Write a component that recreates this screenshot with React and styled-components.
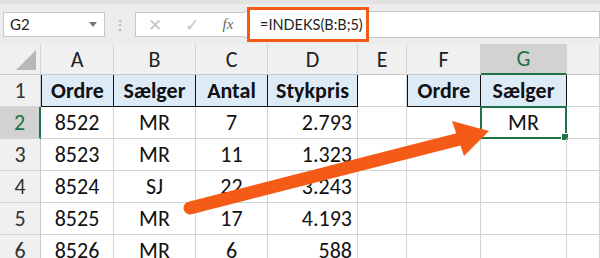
import React from 'react';
import styled, { createGlobalStyle } from 'styled-components';

const GlobalStyle = createGlobalStyle`
  html, body { margin: 0; padding: 0; background: #fff; }
  body { font-family: Carlito, Lato, "Open Sans", sans-serif; }
`;

const orange = '#f45b16';
const green = '#217346';
const cols = [41, 73, 82, 72, 90, 49, 74, 86, 33];

const Sheet = styled.div`
  position: relative;
  width: 600px;
  height: 258px;
  overflow: hidden;
  background: #fff;
`;

const Toolbar = styled.div`
  display: flex;
  align-items: center;
  height: 44px;
  padding: 0 0 0 3px;
  background: #ececec;
  border-top: 4px solid #e2e2e2;
  box-sizing: border-box;
  font-family: Lato, "Open Sans", sans-serif;
`;

const NameBox = styled.div`
  display: flex;
  align-items: center;
  justify-content: space-between;
  width: 102px;
  height: 25px;
  box-sizing: border-box;
  padding: 0 7px 0 6px;
  background: #fff;
  border: 1px solid #c6c6c6;
  font-size: 15px;
  color: #222;
`;

const Caret = styled.span`
  width: 0;
  height: 0;
  border-left: 4px solid transparent;
  border-right: 4px solid transparent;
  border-top: 5px solid #777;
`;

const Grip = styled.div`
  width: 30px;
  text-align: center;
  color: #aaa;
  font-size: 14px;
`;

const FxBox = styled.div`
  display: flex;
  align-items: center;
  justify-content: space-around;
  width: 110px;
  height: 25px;
  box-sizing: border-box;
  background: #fff;
  border: 1px solid #c6c6c6;
  border-right: none;
  color: #c4c4c4;
  font-size: 17px;
`;

const Fx = styled.span`
  font-family: "Liberation Serif", serif;
  font-style: italic;
  font-size: 15px;
  color: #666;
`;

const FormulaArea = styled.div`
  flex: 1;
  display: flex;
  align-items: center;
  height: 25px;
  background: #fff;
  border: 1px solid #c6c6c6;
  border-left: none;
`;

const FormulaText = styled.div`
  height: 29px;
  margin-left: 2px;
  padding: 0 3px 0 10px;
  display: flex;
  align-items: center;
  border: 3px solid ${orange};
  background: #fff;
  font-size: 14.5px;
  color: #222;
`;

const Grid = styled.div`
  display: grid;
  grid-template-columns: ${cols.map((c) => c + 'px').join(' ')};
  grid-template-rows: 31px repeat(6, 32px);
`;

const ColHead = styled.div`
  display: flex;
  align-items: center;
  justify-content: center;
  background: ${(p) => (p.$active ? '#d2d2d2' : '#f0f0f0')};
  border-right: 1px solid #d4d4d4;
  border-bottom: ${(p) => (p.$active ? `2px solid ${green}` : '1px solid #c8c8c8')};
  box-sizing: border-box;
  font-size: 22px;
  color: ${(p) => (p.$active ? green : '#222')};
  position: relative;
`;

const Corner = styled(ColHead)`
  &::after {
    content: '';
    position: absolute;
    right: 4px;
    bottom: 4px;
    border-left: 20px solid transparent;
    border-bottom: 20px solid #b8b8b8;
  }
`;

const RowHead = styled.div`
  display: flex;
  align-items: center;
  justify-content: center;
  background: ${(p) => (p.$active ? '#d2d2d2' : '#f0f0f0')};
  border-right: ${(p) => (p.$active ? `2px solid ${green}` : '1px solid #c8c8c8')};
  border-bottom: 1px solid #d4d4d4;
  box-sizing: border-box;
  font-size: 22px;
  color: ${(p) => (p.$active ? green : '#333')};
`;

const Cell = styled.div`
  position: relative;
  display: flex;
  align-items: center;
  justify-content: ${(p) => (p.$right ? 'flex-end' : 'center')};
  padding-right: ${(p) => (p.$right ? '5px' : '0')};
  box-sizing: border-box;
  border-right: 1px solid #d4d4d4;
  border-bottom: 1px solid #d4d4d4;
  font-size: 22px;
  color: #111;
  white-space: nowrap;
`;

const HeadCell = styled(Cell)`
  background: #ddebf7;
  border-right: 1px solid #111;
  border-bottom: 1px solid #111;
  border-left: ${(p) => (p.$first ? '1px solid #111' : 'none')};
  font-weight: bold;
`;

const Selected = styled(Cell)`
  border: 2px solid ${green};
  margin: -1px 0 0 -1px;
  &::after {
    content: '';
    position: absolute;
    right: -4px;
    bottom: -4px;
    width: 6px;
    height: 6px;
    background: ${green};
    border: 1px solid #fff;
  }
`;

const Arrow = styled.svg`
  position: absolute;
  left: 0;
  top: 0;
  pointer-events: none;
`;

const data = [
  ['8522', 'MR', '7', '2.793'],
  ['8523', 'MR', '11', '1.323'],
  ['8524', 'SJ', '22', '3.243'],
  ['8525', 'MR', '17', '4.193'],
  ['8526', 'MR', '6', '588'],
];

export default function App() {
  return (
    <Sheet>
      <GlobalStyle />
      <Toolbar>
        <NameBox>
          G2
          <Caret />
        </NameBox>
        <Grip>⋮</Grip>
        <FxBox>
          <span>✕</span>
          <span>✓</span>
          <Fx>fx</Fx>
        </FxBox>
        <FormulaArea>
          <FormulaText>=INDEKS(B:B;5)</FormulaText>
        </FormulaArea>
      </Toolbar>
      <Grid>
        <Corner />
        {['A', 'B', 'C', 'D', 'E', 'F', 'G', ''].map((l) => (
          <ColHead key={l || 'h'} $active={l === 'G'}>
            {l}
          </ColHead>
        ))}

        <RowHead>1</RowHead>
        <HeadCell $first>Ordre</HeadCell>
        <HeadCell>Sælger</HeadCell>
        <HeadCell>Antal</HeadCell>
        <HeadCell>Stykpris</HeadCell>
        <Cell />
        <HeadCell $first>Ordre</HeadCell>
        <HeadCell>Sælger</HeadCell>
        <Cell />

        {data.map((row, i) => (
          <React.Fragment key={row[0]}>
            <RowHead $active={i === 0}>{i + 2}</RowHead>
            <Cell>{row[0]}</Cell>
            <Cell>{row[1]}</Cell>
            <Cell>{row[2]}</Cell>
            <Cell $right>{row[3]}</Cell>
            <Cell />
            <Cell />
            {i === 0 ? <Selected>MR</Selected> : <Cell />}
            <Cell />
          </React.Fragment>
        ))}
      </Grid>
      <Arrow width="600" height="258" viewBox="0 0 600 258">
        <line x1="190" y1="208" x2="460" y2="139" stroke={orange} strokeWidth="13" strokeLinecap="round" />
        <polygon points="452,121 489,131 464,156" fill={orange} />
      </Arrow>
    </Sheet>
  );
}
